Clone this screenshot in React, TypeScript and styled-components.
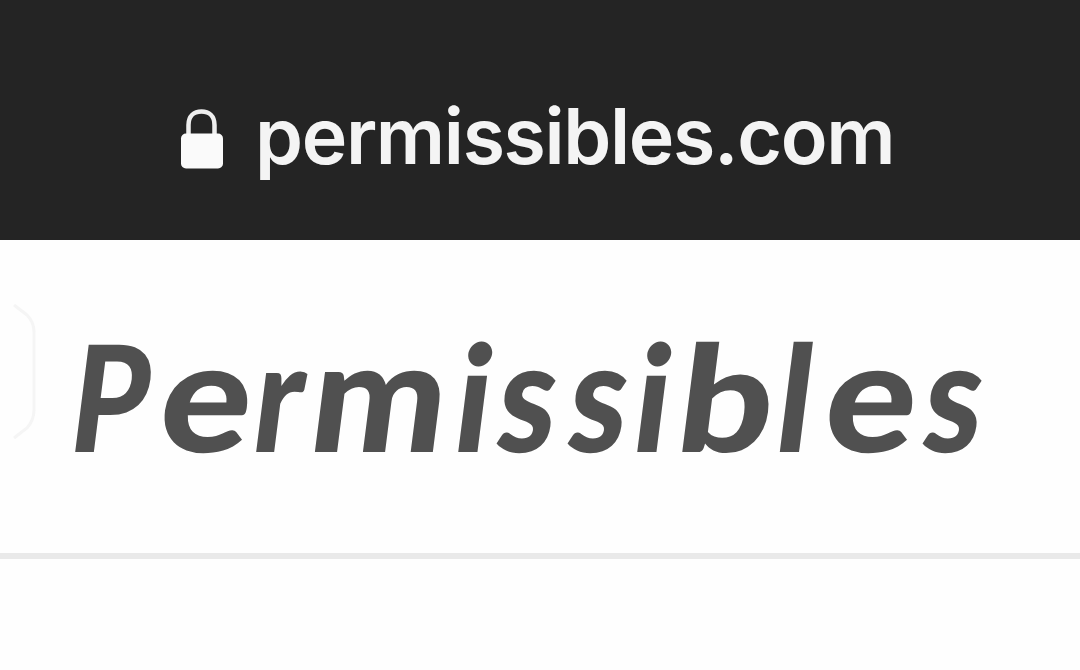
import React from "react";
import styled, { createGlobalStyle } from "styled-components";

const GlobalStyle = createGlobalStyle`
  body { margin: 0; background: #fefefe; overflow: hidden; }
`;
const Page = styled.main`
  width: 1080px;
  height: 670px;
  display: flex;
  flex-direction: column;
  background: #fefefe;
  overflow: hidden;
`;
const AddressBar = styled.header`
  box-sizing: border-box;
  height: 240px;
  flex: none;
  display: flex;
  align-items: flex-start;
  padding: 108px 0 0 180px;
  background: #242424;
`;
const LockIcon = styled.svg`
  width: 44px;
  height: 62px;
  flex: none;
`;
const Address = styled.span`
  margin: -11px 0 0 31px;
  font: 600 77px/78px Inter, sans-serif;
  letter-spacing: -1.35px;
  color: #f4f4f4;
  white-space: nowrap;
`;
const SiteHeader = styled.section`
  box-sizing: border-box;
  height: 319px;
  flex: none;
  display: flex;
  align-items: flex-start;
  border-bottom: 6px solid #e9e9e9;
`;
const MenuEdge = styled.svg`
  width: 40px;
  height: 136px;
  margin-top: 64px;
  flex: none;
`;
const Brand = styled.h1`
  display: flex;
  margin: 70px 0 0 26px;
  font: 900 148px/170px Lato, sans-serif;
  color: #505050;
  white-space: nowrap;
  transform-origin: 0 141px;
  transform: skewX(-7.2deg);
`;
const Letter = styled.span<{ $advance: number; $stretch: number; $rise: number }>`
  flex: none;
  width: ${(p) => p.$advance}px;
  transform-origin: 0 142px;
  transform: scale(${(p) => p.$stretch}, ${(p) => p.$rise});
`;

const letters: [string, number, number, number][] = [
  ["P", 88.5, 0.84, 1],
  ["e", 94.5, 1.15, 1.05],
  ["r", 57, 0.88, 1.035],
  ["m", 144, 1.085, 1.05],
  ["i", 43, 0.94, 1],
  ["s", 71, 0.89, 1.05],
  ["s", 65, 0.89, 1.05],
  ["i", 44, 0.94, 1],
  ["b", 99, 1.13, 1],
  ["l", 47.5, 0.94, 1],
  ["e", 99.5, 1.15, 1.05],
  ["s", 70, 0.89, 1.05],
];

export default function App() {
  return (
    <Page>
      <GlobalStyle />
      <AddressBar>
        <LockIcon viewBox="0 0 44 62" aria-hidden="true">
          <path d="M8.500 32V17C8.500 8 14 3.500 21.500 3.500S34.500 8 34.500 17v15" fill="none" stroke="#eeeeee" strokeWidth="4.500" />
          <rect x="1" y="25.500" width="42" height="35" rx="5" fill="#fafafa" />
        </LockIcon>
        <Address>permissibles.com</Address>
      </AddressBar>
      <SiteHeader>
        <MenuEdge viewBox="0 0 40 136" aria-hidden="true">
          <path d="M14 1L27 11Q34 18 34 28V106Q34 116 27 124L14 134" fill="none" stroke="#f5f5f5" strokeWidth="3" />
        </MenuEdge>
        <Brand>
          {letters.map(([character, advance, stretch, rise], index) => (
            <Letter key={index} $advance={advance} $stretch={stretch} $rise={rise}>{character}</Letter>
          ))}
        </Brand>
      </SiteHeader>
    </Page>
  );
}
